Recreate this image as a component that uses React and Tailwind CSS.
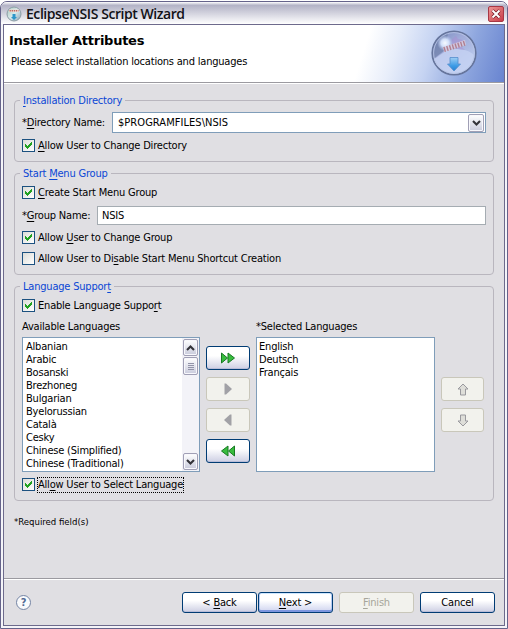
import React from 'react';

const U = ({ children }) => (
  <span className="underline decoration-1 underline-offset-2">{children}</span>
);

function Check({ on = true, className = '', labelClass = 'ml-[3px]', children }) {
  return (
    <div className={`flex h-[13px] items-center ${className}`}>
      <span className="flex h-[13px] w-[13px] shrink-0 items-center justify-center border border-[#1c5180] bg-linear-to-br from-[#dcdcd7] to-white">
        {on && (
          <svg width="9" height="9" viewBox="0 0 9 9" shapeRendering="crispEdges">
            <path d="M1 3h1v1h1v1h1v-1h1v-1h1v-1h1v-1h1v3h-1v1h-1v1h-1v1h-1v1h-1v-1h-1v-1h-1z" fill="#21a121" />
          </svg>
        )}
      </span>
      <span className={labelClass}>{children}</span>
    </div>
  );
}

function Group({ title, className, children }) {
  return (
    <section className={`relative mx-[10px] rounded-[4px] border border-[#b9b6be] ${className}`}>
      <h2 className="absolute -top-[7px] left-[5px] bg-[#e0dfe3] px-[3px] text-[#0a46d5]">{title}</h2>
      {children}
    </section>
  );
}

function Chevron({ up = false }) {
  return (
    <svg width="9" height="6" viewBox="0 0 9 6" fill="none" className={up ? 'rotate-180' : ''}>
      <path d="M1 1l3.5 3.5L8 1" stroke="#333339" strokeWidth="2.1" />
    </svg>
  );
}

function ScrollButton({ className = '', children }) {
  return (
    <span className={`flex shrink-0 items-center justify-center rounded-[2px] border border-[#a09fb5] bg-linear-to-b from-white to-[#c9cbdc] shadow-[inset_0_0_0_1px_#f8f8fc] ${className}`}>
      {children}
    </span>
  );
}

function Btn({ disabled = false, focus = false, className = '', children }) {
  let look = 'border-[#003c74] bg-linear-to-b from-white from-40% to-[#cdcfe3] shadow-[inset_0_-1px_0_#b9bdd8]';
  if (focus) look = 'border-[#003c74] bg-linear-to-b from-white from-40% to-[#cdd2ee] shadow-[inset_0_-2px_0_#7d96df,inset_1px_0_0_#b5caf3,inset_-1px_0_0_#b5caf3,inset_0_1px_0_#cee7ff]';
  if (disabled) look = 'border-[#c9c7ba] bg-[#f2f2ed] text-[#a6a59a]';
  return (
    <button className={`flex shrink-0 items-center justify-center rounded-[3px] border ${look} ${className}`}>
      {children}
    </button>
  );
}

function DoubleArrow({ left = false }) {
  return (
    <svg width="16" height="12" viewBox="0 0 16 12" className={left ? 'rotate-180' : ''}>
      <path d="M1.500 1L7.500 6 1.500 11zM8 1L14.500 6 8 11z" fill="#38bc3e" stroke="#187a25" strokeWidth="1" />
    </svg>
  );
}

function SingleArrow({ left = false }) {
  return (
    <svg width="10" height="12" viewBox="0 0 10 12" className={left ? 'rotate-180' : ''}>
      <path d="M1.5 .5h1.5L9 6 3 11.5H1.5z" fill="#a1a1a6" />
    </svg>
  );
}

function BlockArrow({ down = false }) {
  return (
    <svg width="12" height="13" viewBox="0 0 12 13" className={down ? 'rotate-180' : ''}>
      <path d="M6 1L11 6H8.5v6h-5V6H1z" fill="#deded9" stroke="#99999e" />
    </svg>
  );
}

function TitleIcon() {
  return (
    <svg width="16" height="16" viewBox="0 0 16 16">
      <defs>
        <linearGradient id="mini" x1="0" y1="0" x2="1" y2="1">
          <stop offset="0" stopColor="#a9c9bb" />
          <stop offset=".5" stopColor="#d9e9ea" />
          <stop offset="1" stopColor="#86a3b8" />
        </linearGradient>
      </defs>
      <circle cx="8" cy="8" r="7" fill="url(#mini)" stroke="#8b9ca5" />
      <path d="M3 3.500h10v2.500H3z" fill="#f1dfdc" />
      <path d="M3.500 4.700h9" stroke="#bc6a5e" strokeWidth="1.400" strokeDasharray="1.4 .7" />
      <path d="M6.500 8h3v3H11l-3 3-3-3h1.500z" fill="#2d96c9" />
    </svg>
  );
}

function Orb() {
  return (
    <svg width="46" height="46" viewBox="0 0 46 46">
      <defs>
        <linearGradient id="orb" x1="0" y1="0" x2=".7" y2="1">
          <stop offset="0" stopColor="#7488ba" />
          <stop offset=".4" stopColor="#a0abd9" />
          <stop offset="1" stopColor="#c0d1f2" />
        </linearGradient>
        <radialGradient id="shine">
          <stop offset="0" stopColor="#f6faff" />
          <stop offset=".5" stopColor="#d2e0fa" />
          <stop offset="1" stopColor="#afc0ea" stopOpacity="0" />
        </radialGradient>
        <linearGradient id="arrow" x1="0" y1="0" x2="0" y2="1">
          <stop offset="0" stopColor="#9fcef4" />
          <stop offset=".6" stopColor="#3f9ce6" />
          <stop offset="1" stopColor="#2580d2" />
        </linearGradient>
      </defs>
      <circle cx="23" cy="23" r="21.800" fill="url(#orb)" stroke="#66759c" strokeWidth="1.600" />
      <path d="M2.500 29C2 13 9 5 17 3l-3 17z" fill="#64779f" opacity=".6" />
      <path d="M3 29c9-5 11-10 20-10 10 0 16 2 20 6-1 12-10 18-20 18S5 37 3 29z" fill="#c5d2f2" opacity=".8" />
      <path d="M20 10l5-4 2 3 5 1-3 5 5 5-12-2z" fill="#a98fd2" opacity=".5" />
      <circle cx="14" cy="13" r="8" fill="url(#shine)" />
      <path d="M12 17l22-7 1 5-22 7z" fill="#dccfe2" opacity=".8" />
      <path d="M13 19.500l21.500-6.500" stroke="#b07f90" strokeWidth="5" strokeDasharray="1.400 1.500" />
      <circle cx="23" cy="23" r="20.400" fill="none" stroke="#b9c5e5" strokeWidth=".8" />
      <path d="M19 27.500h8v6.500h2.500L23 41l-6.500-7H19z" fill="url(#arrow)" stroke="#548dcc" strokeWidth=".8" />
    </svg>
  );
}

const languages = ['Albanian', 'Arabic', 'Bosanski', 'Brezhoneg', 'Bulgarian', 'Byelorussian', 'Català', 'Cesky', 'Chinese (Simplified)', 'Chinese (Traditional)'];

export default function App() {
  return (
    <div className="h-[629px] w-[508px] overflow-hidden bg-white font-['DejaVu_Sans_Condensed','DejaVu_Sans',sans-serif] text-[11px] leading-[13px] tracking-[-0.2px] whitespace-nowrap text-black [font-stretch:condensed]">
      <div className="mt-px flex h-[628px] flex-col rounded-t-[7px] border border-[#65638a] bg-[#f4f4f8] px-[2px] pb-[2px]">
        <header className="-mx-[2px] flex h-[22px] shrink-0 items-center rounded-t-[6px] bg-linear-to-b from-white via-[#b3b3c6] via-15% to-white pt-px pr-[3px] pl-[5px]">
          <TitleIcon />
          <span className="ml-[4px] font-['Open_Sans','Noto_Sans',sans-serif] text-[14px] font-semibold tracking-[-0.44px] text-[#111116] [font-stretch:normal]">EclipseNSIS Script Wizard</span>
          <button className="ml-auto flex h-[16px] w-[16px] items-center justify-center rounded-[2px] border border-[#a73744] bg-linear-to-br from-[#ed9594] to-[#c83a4a]">
            <svg width="10" height="10" viewBox="0 0 10 10">
              <path d="M1.500 1.500l7 7M8.500 1.500l-7 7" stroke="#6d1522" strokeWidth="3.200" />
              <path d="M1.500 1.500l7 7M8.500 1.500l-7 7" stroke="#fff" strokeWidth="2" />
            </svg>
          </button>
        </header>

        <main className="flex min-h-0 grow flex-col border border-[#6d6a8c] bg-[#e0dfe3]">
          <div className="flex h-[58px] shrink-0 border-b border-[#9b9aa0] bg-[linear-gradient(107deg,#fff_0%,#fff_71%,#e8eefa_77%,#c5d3f2_84%,#8ea6de_92%,#6884d0_100%)]">
            <div className="pl-[5px]">
              <h1 className="mt-[8px] text-[13px] leading-[15px] font-bold tracking-[-0.25px] [font-family:'DejaVu_Sans',sans-serif] [font-stretch:normal]">Installer Attributes</h1>
              <p className="mt-[7px] pl-[2px]">Please select installation locations and languages</p>
            </div>
            <div className="mt-[5px] mr-[27px] ml-auto"><Orb /></div>
          </div>
          <div className="h-px shrink-0 bg-white" />

          <Group title={<><U>I</U>nstallation Directory</>} className="mt-[16px] h-[62px] shrink-0 pt-[11px] pl-[7px]">
            <div className="flex h-[21px] items-center">
              <span className="w-[90px]">*<U>D</U>irectory Name:</span>
              <div className="flex h-[21px] w-[374px] items-center border border-[#7f9db9] bg-white pr-px pl-[5px]">
                <span className="-mt-px grow tracking-[0.05px]">$PROGRAMFILES\NSIS</span>
                <ScrollButton className="h-[18px] w-[16px]"><Chevron /></ScrollButton>
              </div>
            </div>
            <Check className="mt-[6px]"><U>A</U>llow User to Change Directory</Check>
          </Group>

          <Group title={<>Start <U>M</U>enu Group</>} className="mt-[11px] h-[102px] shrink-0 pt-[12px] pl-[7px]">
            <Check><U>C</U>reate Start Menu Group</Check>
            <div className="mt-[7px] flex h-[19px] items-center">
              <span className="w-[75px]">*<U>G</U>roup Name:</span>
              <div className="flex h-[19px] w-[389px] items-center border border-[#a5acb2] bg-white pl-[4px]">NSIS</div>
            </div>
            <Check className="mt-[6px]">Allow <U>U</U>ser to Change Group</Check>
            <Check on={false} className="mt-[8px]">Allow User to Di<U>s</U>able Start Menu Shortcut Creation</Check>
          </Group>

          <Group title={<>Language Suppor<U>t</U></>} className="mt-[11px] h-[215px] shrink-0 pt-[12px] pl-[7px]">
            <Check>Enable Language Suppo<U>r</U>t</Check>
            <div className="mt-[8px] flex">
              <span className="w-[234px]">Available Languages</span>
              <span>*Selected Languages</span>
            </div>
            <div className="mt-[4px] flex h-[135px]">
              <div className="flex w-[178px] justify-between border border-[#7f9db9] bg-white">
                <ul className="pt-[2px] pl-[3px]">
                  {languages.map((l) => <li key={l}>{l}</li>)}
                </ul>
                <div className="flex w-[17px] flex-col bg-[#f3f3f8] px-px py-px">
                  <ScrollButton className="h-[17px]"><Chevron up /></ScrollButton>
                  <ScrollButton className="mt-px h-[18px]">
                    <span className="h-[7px] w-[6px] bg-[repeating-linear-gradient(to_bottom,#9293a8_0px,#9293a8_1px,transparent_1px,transparent_2px)]" />
                  </ScrollButton>
                  <ScrollButton className="mt-auto h-[17px]"><Chevron /></ScrollButton>
                </div>
              </div>
              <div className="ml-[6px] flex flex-col gap-[7px] pt-[9px]">
                <Btn className="h-[24px] w-[44px]"><DoubleArrow /></Btn>
                <Btn disabled className="h-[24px] w-[44px]"><SingleArrow /></Btn>
                <Btn disabled className="h-[24px] w-[44px]"><SingleArrow left /></Btn>
                <Btn className="h-[24px] w-[44px]"><DoubleArrow left /></Btn>
              </div>
              <ul className="ml-[6px] w-[179px] border border-[#7f9db9] bg-white pt-[2px] pl-[2px]">
                <li>English</li>
                <li>Deutsch</li>
                <li>Français</li>
              </ul>
              <div className="ml-[6px] flex flex-col gap-[7px] pt-[40px]">
                <Btn disabled className="h-[24px] w-[43px]"><BlockArrow /></Btn>
                <Btn disabled className="h-[24px] w-[43px]"><BlockArrow down /></Btn>
              </div>
            </div>
            <Check className="mt-[6px]" labelClass="ml-[2px] flex h-[16px] w-[147px] items-center border border-dotted border-black">
              <span>All<U>o</U>w User to Select Language</span>
            </Check>
          </Group>

          <p className="mt-[14px] pl-[10px] text-[9.5px] tracking-[0px]">*Required field(s)</p>

          <footer className="mt-auto flex h-[47px] shrink-0 items-center border-t border-[#9b9aa0] pr-[9px] pl-[12px] shadow-[inset_0_1px_0_#fff]">
            <span className="flex h-[15px] w-[15px] items-center justify-center rounded-full border border-[#7484a4] bg-[#f9fafc] text-[11px] font-bold text-[#526b95]">?</span>
            <Btn className="ml-auto h-[21px] w-[75px]"><span>&lt; <U>B</U>ack</span></Btn>
            <Btn focus className="ml-[1px] h-[21px] w-[75px]"><span><U>N</U>ext &gt;</span></Btn>
            <Btn disabled className="ml-[6px] h-[21px] w-[75px]"><span><U>F</U>inish</span></Btn>
            <Btn className="ml-[6px] h-[21px] w-[75px]">Cancel</Btn>
          </footer>
        </main>
      </div>
    </div>
  );
}
